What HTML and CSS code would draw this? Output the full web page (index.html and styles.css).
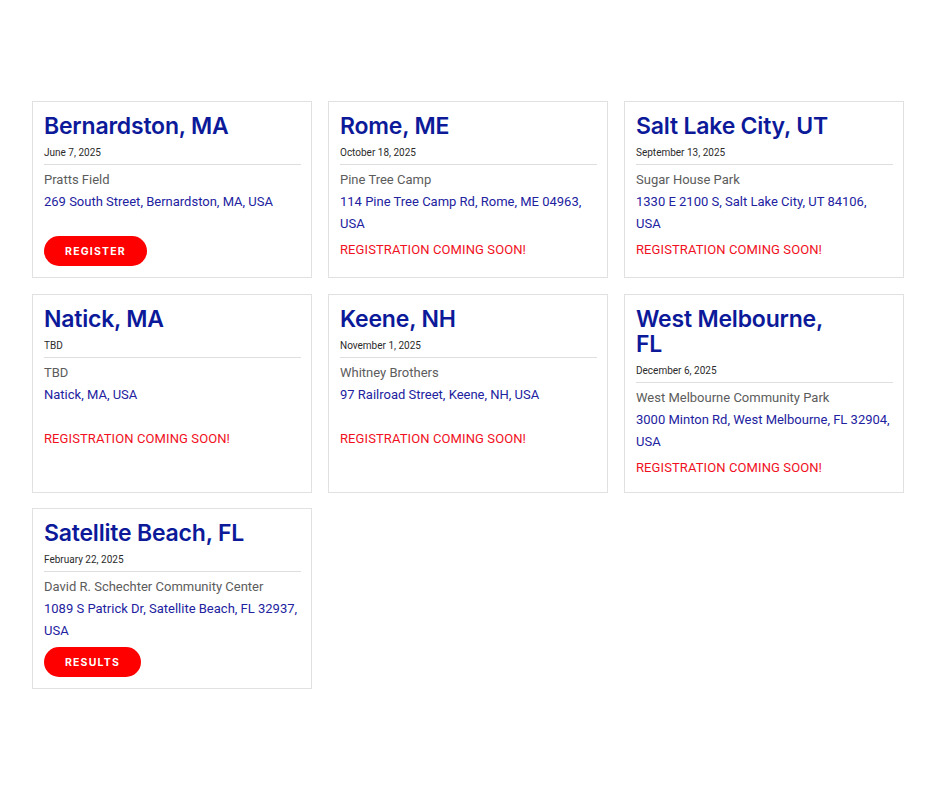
FILE: index.html
```html
<!DOCTYPE html>
<html lang="en">
<head>
<meta charset="utf-8">
<title>Events</title>
<link rel="stylesheet" href="styles.css">
</head>
<body>
<main class="events">
  <article class="card">
    <h2 class="city">Bernardston, MA</h2>
    <div class="date">June 7, 2025</div>
    <div class="venue">Pratts Field</div>
    <div class="addr">269 South Street, Bernardston, MA, USA</div>
    <a class="btn">REGISTER</a>
  </article>
  <article class="card">
    <h2 class="city">Rome, ME</h2>
    <div class="date">October 18, 2025</div>
    <div class="venue">Pine Tree Camp</div>
    <div class="addr">114 Pine Tree Camp Rd, Rome, ME 04963, USA</div>
    <div class="soon">REGISTRATION COMING SOON!</div>
  </article>
  <article class="card">
    <h2 class="city">Salt Lake City, UT</h2>
    <div class="date">September 13, 2025</div>
    <div class="venue">Sugar House Park</div>
    <div class="addr">1330 E 2100 S, Salt Lake City, UT 84106, USA</div>
    <div class="soon">REGISTRATION COMING SOON!</div>
  </article>
  <article class="card">
    <h2 class="city">Natick, MA</h2>
    <div class="date">TBD</div>
    <div class="venue">TBD</div>
    <div class="addr">Natick, MA, USA</div>
    <div class="soon">REGISTRATION COMING SOON!</div>
  </article>
  <article class="card">
    <h2 class="city">Keene, NH</h2>
    <div class="date">November 1, 2025</div>
    <div class="venue">Whitney Brothers</div>
    <div class="addr">97 Railroad Street, Keene, NH, USA</div>
    <div class="soon">REGISTRATION COMING SOON!</div>
  </article>
  <article class="card">
    <h2 class="city">West Melbourne, FL</h2>
    <div class="date">December 6, 2025</div>
    <div class="venue">West Melbourne Community Park</div>
    <div class="addr">3000 Minton Rd, West Melbourne, FL 32904, USA</div>
    <div class="soon">REGISTRATION COMING SOON!</div>
  </article>
  <article class="card">
    <h2 class="city">Satellite Beach, FL</h2>
    <div class="date">February 22, 2025</div>
    <div class="venue">David R. Schechter Community Center</div>
    <div class="addr">1089 S Patrick Dr, Satellite Beach, FL 32937, USA</div>
    <a class="btn btn-results">RESULTS</a>
  </article>
</main>
</body>
</html>
```

FILE: styles.css
```css
html, body {
  margin: 0;
  padding: 0;
  background: #ffffff;
}

body {
  font-family: Roboto, "Liberation Sans", sans-serif;
  width: 940px;
  height: 788px;
  overflow: hidden;
}

.events {
  display: grid;
  grid-template-columns: repeat(3, 280px);
  column-gap: 16px;
  row-gap: 15.5px;
  padding: 101px 0 0 32px;
  align-items: stretch;
}

.card {
  border: 1px solid #e1e1e1;
  padding: 12px 12px 11px 11px;
  display: flex;
  flex-direction: column;
  align-items: flex-start;
  box-sizing: border-box;
}

.city {
  margin: 0;
  padding-right: 38px;
  font-family: Inter, "Noto Sans", sans-serif;
  font-weight: 600;
  font-size: 23px;
  line-height: 25px;
  letter-spacing: -0.2px;
  color: #0c1a9a;
}

.date {
  margin-top: 7px;
  align-self: stretch;
  margin-right: -2px;
  font-size: 10px;
  line-height: 14px;
  color: #2b2b2b;
  padding-bottom: 4px;
  border-bottom: 1px solid #dedede;
}

.venue {
  margin-top: 4px;
  font-size: 13px;
  line-height: 22px;
  color: #5c5c5c;
}

.addr {
  font-size: 13px;
  line-height: 22px;
  min-height: 40px;
  color: #2222a0;
}

.soon {
  margin: 4px 0 2px;
  font-size: 13px;
  letter-spacing: 0.1px;
  line-height: 22px;
  color: #f0101e;
}

.btn {
  margin-top: 5px;
  display: inline-flex;
  align-items: center;
  justify-content: center;
  height: 30px;
  width: 103px;
  box-sizing: border-box;
  border-radius: 15px;
  background: #ff0000;
  color: #ffffff;
  font-family: Inter, "Noto Sans", sans-serif;
  font-weight: 700;
  font-size: 10.5px;
  letter-spacing: 1.2px;
}

.btn-results {
  width: 97px;
}
```
